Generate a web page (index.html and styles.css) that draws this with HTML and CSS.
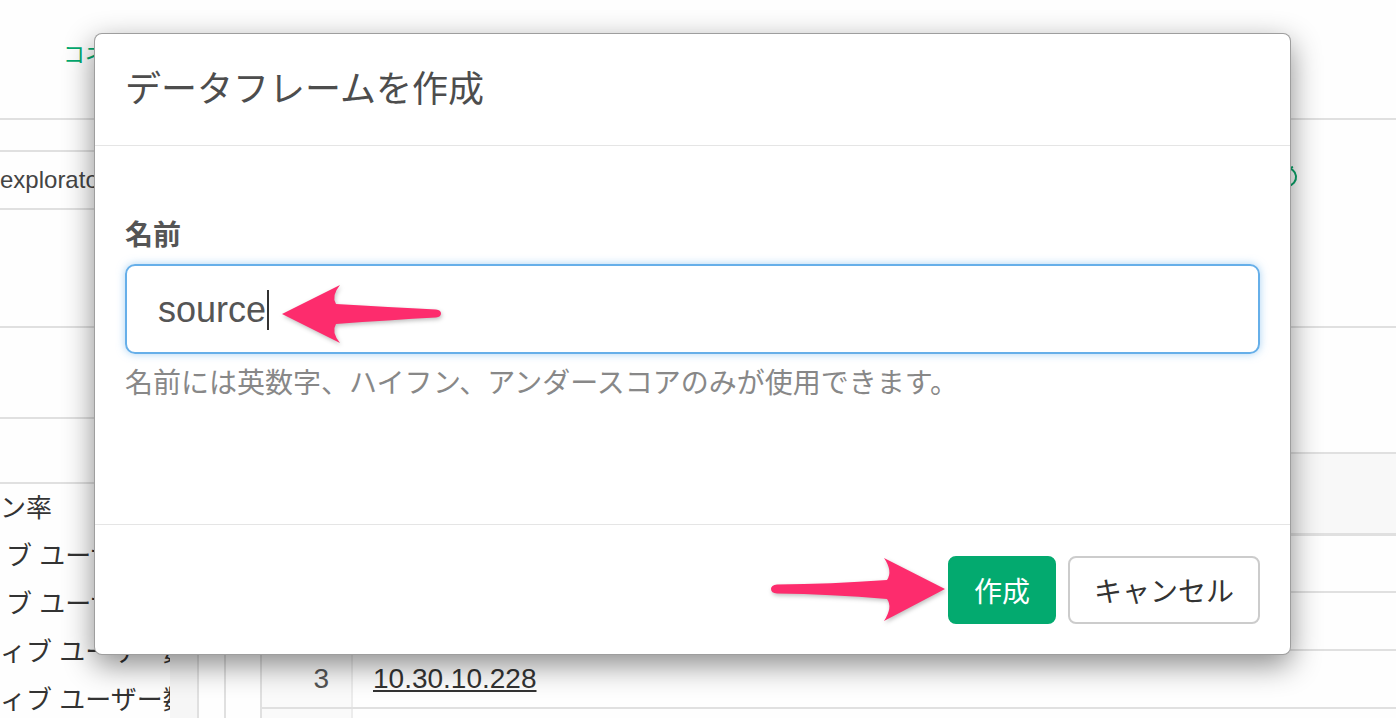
FILE: index.html
```html
<!DOCTYPE html>
<html lang="ja">
<head>
  <meta charset="UTF-8">
  <meta name="viewport" content="width=device-width, initial-scale=1.0">
  <title>データフレームを作成</title>
  <link rel="stylesheet" href="styles.css">
</head>
<body>

<div class="page">
  <!-- background app -->
  <div class="topbar">
    <a class="top-link">コネクション</a>
  </div>

  <div class="workspace">
    <aside class="sidebar">
      <div class="sb-tabs"></div>
      <div class="sb-select">exploratory</div>
      <div class="sb-block"></div>
      <div class="sb-block sb-block-2"></div>
      <div class="sb-block sb-block-3"></div>
      <ul class="sb-list">
        <li>ン率</li>
        <li class="shift">ブ ユーザー数</li>
        <li class="shift">ブ ユーザー数</li>
        <li>ィブ ユーザー数</li>
        <li>ィブ ユーザー数</li>
      </ul>
    </aside>
    <div class="strip"></div>
    <div class="gutter"></div>
    <div class="gutter gutter-wide"></div>

    <section class="content">
      <div class="content-top">
        <svg class="refresh" width="20" height="28" viewBox="0 0 20 28">
          <path d="M6 6 A9 9 0 0 1 8 24" fill="none" stroke="#0aa56a" stroke-width="2"/>
          <path d="M3 1 L7 7 L13 5" fill="none" stroke="#0aa56a" stroke-width="2"/>
        </svg>
      </div>
      <div class="content-mid"></div>
      <table class="grid">
        <thead>
          <tr><th class="num"></th><th></th></tr>
        </thead>
        <tbody>
          <tr><td class="num">1</td><td><a>10.30.10.201</a></td></tr>
          <tr><td class="num">2</td><td><a>10.30.10.215</a></td></tr>
          <tr><td class="num">3</td><td><a>10.30.10.228</a></td></tr>
          <tr><td class="num"></td><td></td></tr>
        </tbody>
      </table>
    </section>
  </div>

  <!-- dialog -->
  <div class="modal">
    <div class="modal-header">
      <h4 class="modal-title">データフレームを作成</h4>
    </div>
    <div class="modal-body">
      <label class="field-label">名前</label>
      <div class="field-input">source<span class="caret"></span></div>
      <p class="help">名前には英数字、ハイフン、アンダースコアのみが使用できます。</p>
    </div>
    <div class="modal-footer">
      <button class="btn btn-primary">作成</button>
      <button class="btn btn-default">キャンセル</button>
    </div>
  </div>

  <!-- annotation arrows -->
  <svg class="arrows" width="1396" height="718" viewBox="0 0 1396 718">
    <path d="M282,314 L340,285 Q331,296 336,304 Q390,307 436,309.5 Q441,310 441,313.5 Q441,317 436,317.5 Q390,320 336,324 Q331,332 340,343 Z" fill="#fd2c6d"/>
    <path d="M945,589 L884,558 Q893,571 887,580 Q830,584 777,584.5 Q771,585 771,589 Q771,593 777,593.5 Q830,594 887,599 Q893,607 884,621 Z" fill="#fd2c6d"/>
  </svg>
</div>

</body>
</html>
```

FILE: styles.css
```css
:root {
  --line: #e0e0e0;
  --green: #03aa6f;
  --text: #333;
}
* { box-sizing: border-box; }
body {
  margin: 0;
  font-family: "Liberation Sans", "Noto Sans CJK JP", sans-serif;
  color: var(--text);
  background: #fff;
}
.page {
  position: relative;
  width: 1396px;
  height: 718px;
  overflow: hidden;
  background: #fefefe;
}

/* background app */
.topbar {
  height: 120px;
  border-bottom: 2px solid var(--line);
  padding: 38px 0 0 63px;
}
.top-link {
  color: var(--green);
  font-size: 22px;
  line-height: 34px;
}
.workspace {
  display: flex;
  height: 598px;
}
.sidebar {
  width: 170px;
  overflow: hidden;
}
.sb-tabs {
  height: 32px;
  border-bottom: 2px solid var(--line);
}
.sb-select {
  height: 58px;
  border-bottom: 2px solid var(--line);
  font-size: 24px;
  line-height: 56px;
  color: #444;
  white-space: nowrap;
}
.sb-block {
  height: 118px;
  border-bottom: 2px solid var(--line);
}
.sb-block-2 { height: 91px; }
.sb-block-3 { height: 65px; }
.sb-list {
  list-style: none;
  margin: 0;
  padding: 0;
}
.sb-list li {
  height: 48px;
  line-height: 48px;
  font-size: 26px;
  white-space: nowrap;
  color: #333;
}
.sb-list .shift { padding-left: 6px; }
.strip {
  width: 29px;
  background: #f6f6f6;
  border-right: 2px solid var(--line);
}
.gutter {
  width: 27px;
  border-right: 2px solid var(--line);
}
.gutter-wide { width: 36px; }
.content {
  flex: 1;
}
.content-top {
  height: 208px;
  border-bottom: 2px solid var(--line);
  display: flex;
  justify-content: flex-end;
  padding: 42px 96px 0 0;
}
.content-mid {
  height: 124px;
}
.grid {
  width: 100%;
  border-collapse: collapse;
  font-size: 28px;
}
.grid thead th {
  height: 81px;
  background: #f8f8f8;
  border-top: 2px solid var(--line);
  border-bottom: 3px solid var(--line);
}
.grid td {
  height: 58px;
  border-bottom: 2px solid var(--line);
  padding: 0 20px;
  color: #333;
}
.grid .num {
  width: 90px;
  text-align: right;
  padding-right: 22px;
  background: #fafafa;
  border-right: 2px solid #ececec;
  color: #555;
}
.grid td a {
  text-decoration: underline;
  color: #333;
}

/* dialog */
.modal {
  position: absolute;
  top: 33px;
  left: 94px;
  width: 1197px;
  background: #fff;
  border: 1px solid rgba(0, 0, 0, 0.38);
  border-radius: 8px;
  box-shadow: 0 10px 30px rgba(0, 0, 0, 0.45);
}
.modal-header {
  padding: 30px;
  border-bottom: 1px solid #e5e5e5;
}
.modal-title {
  margin: 0;
  font-size: 36px;
  line-height: 51px;
  font-weight: normal;
  color: #4d4d4d;
}
.modal-body {
  padding: 70px 30px 120px;
}
.field-label {
  display: block;
  font-size: 28px;
  line-height: 40px;
  font-weight: bold;
  color: #555;
  margin-bottom: 8px;
}
.field-input {
  display: flex;
  align-items: center;
  height: 90px;
  padding: 2px 31px 0;
  border: 2px solid #66afe9;
  border-radius: 10px;
  box-shadow: 0 0 8px rgba(102, 175, 233, 0.55);
  font-size: 36px;
  color: #555;
}
.caret {
  display: inline-block;
  width: 2px;
  height: 40px;
  margin-left: 1px;
  background: #333;
}
.help {
  margin: 10px 0 0;
  font-size: 28px;
  line-height: 40px;
  color: #888;
}
.modal-footer {
  display: flex;
  justify-content: flex-end;
  gap: 12px;
  padding: 31px 30px 30px;
  border-top: 1px solid #e5e5e5;
}
.btn {
  height: 68px;
  padding: 0 24px;
  border-radius: 8px;
  font-family: inherit;
  font-size: 28px;
  border: 2px solid transparent;
}
.btn-primary {
  background: var(--green);
  border-color: var(--green);
  color: #fff;
}
.btn-default {
  min-width: 190px;
  background: #fff;
  border-color: #ccc;
  color: #333;
}

/* annotations */
.arrows {
  position: absolute;
  top: 0;
  left: 0;
  filter: drop-shadow(1px 2px 2px rgba(0, 0, 0, 0.25));
}
```
